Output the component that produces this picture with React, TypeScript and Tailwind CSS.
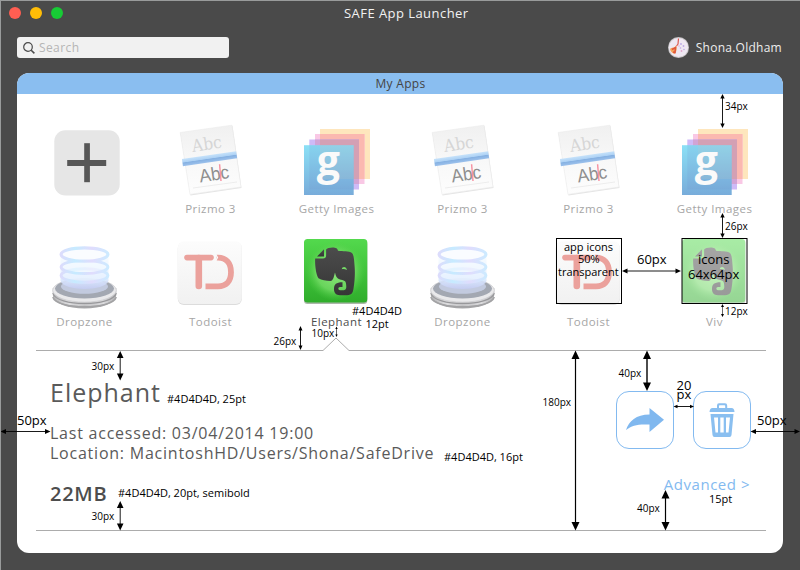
import React from "react";

function PlusIcon() {
  return (
    <svg className="h-[66px] w-[66px] overflow-visible" viewBox="0 0 66 66">
      <rect x="3.3" y="5.2" width="65.4" height="65.3" rx="11" fill="#e6e6e6" />
      <rect x="16.2" y="35" width="39" height="6" fill="#575757" />
      <rect x="33.2" y="18.2" width="5.7" height="39" fill="#575757" />
    </svg>
  );
}

function PrizmoIcon() {
  return (
    <svg className="h-[66px] w-[66px] overflow-visible" viewBox="0 0 66 66">
      <defs>
        <linearGradient id="pz" x1="0" y1="0" x2="0" y2="1">
          <stop offset="0" stopColor="#f0f0f0" />
          <stop offset="0.5" stopColor="#f8f8f8" />
          <stop offset="1" stopColor="#fdfdfd" />
        </linearGradient>
        <linearGradient id="pzb" x1="0" y1="0" x2="0" y2="1">
          <stop offset="0" stopColor="#c6e2fa" />
          <stop offset="0.45" stopColor="#aed2f5" />
          <stop offset="0.55" stopColor="#86b1e2" />
          <stop offset="1" stopColor="#9cc1ec" />
        </linearGradient>
      </defs>
      <path d="M3.5 8.5 55.5 1 64.5 63 13.500 70.600Z" fill="#e4e4e4" />
      <path d="M3.2 7.5 55 .2 64 62 13 69.400Z" fill="url(#pz)" stroke="#ebebeb" strokeWidth=".6" />
      <path d="M16 63 60 57" stroke="#e3e3e3" strokeWidth=".6" />
      <g transform="rotate(-8.3 33 34)">
        <text x="32" y="24.5" textAnchor="middle" textLength="30" lengthAdjust="spacingAndGlyphs" fontSize="17" fill="#d6d6d6" fontFamily="DejaVu Serif, serif">Abc</text>
        <rect x="5.2" y="30" width="54.8" height="7.2" fill="url(#pzb)" />
        <text x="35" y="55.8" textAnchor="middle" textLength="30" lengthAdjust="spacingAndGlyphs" fontSize="18.5" fill="#8e8e8e" fontFamily="Liberation Sans, sans-serif">Abc</text>
      </g>
      <path d="M42.600 39.300 44 56" stroke="#f78f9f" strokeWidth="1.400" />
    </svg>
  );
}

function GettyIcon() {
  return (
    <svg className="h-[66px] w-[66px] overflow-visible" viewBox="0 0 66 66">
      <defs>
        <linearGradient id="gt" x1="0" y1="0" x2="0" y2="1">
          <stop offset="0" stopColor="#8be0f6" />
          <stop offset="1" stopColor="#78acda" />
        </linearGradient>
      </defs>
      <rect x="17" y="4" width="50" height="50" fill="#fee6bd" />
      <rect x="12" y="9" width="49.500" height="50" fill="#f9c8e5" />
      <rect x="17" y="9" width="44.500" height="45" fill="#fbb8b0" />
      <rect x="6.300" y="14.500" width="49.700" height="50" fill="#cfbaf7" />
      <rect x="12" y="14.500" width="44" height="44.500" fill="#d1a4d5" />
      <rect x="17" y="14.500" width="39" height="39.500" fill="#d3a0b4" />
      <rect x="1" y="20.200" width="49.700" height="49.800" fill="url(#gt)" />
      <rect x="6.300" y="20.200" width="44.400" height="44.300" fill="#7088c8" opacity=".14" />
      <rect x="17" y="20.200" width="33.700" height="33.800" fill="#d8c8b8" opacity=".14" />
      <text x="13.800" y="50" fontSize="41" fontWeight="700" fill="#fafafa" fontFamily="Open Sans, sans-serif">g</text>
    </svg>
  );
}

function DropzoneIcon() {
  return (
    <svg className="h-[66px] w-[66px] overflow-visible" viewBox="0 0 66 66">
      <defs>
        <linearGradient id="dzm" x1="0" y1="0" x2="1" y2="0">
          <stop offset="0" stopColor="#b2b2b4" />
          <stop offset=".25" stopColor="#dedee0" />
          <stop offset=".5" stopColor="#c2c2c4" />
          <stop offset=".8" stopColor="#dcdcde" />
          <stop offset="1" stopColor="#b0b0b2" />
        </linearGradient>
        <linearGradient id="dzl" x1="0" y1="0" x2="0" y2="1">
          <stop offset="0" stopColor="#f1f9ff" stopOpacity=".6" />
          <stop offset=".7" stopColor="#dceafe" />
          <stop offset="1" stopColor="#c5cdf3" />
        </linearGradient>
        <linearGradient id="dzr" x1="0" y1="0" x2="1" y2="0">
          <stop offset="0" stopColor="#dcdcfc" />
          <stop offset=".3" stopColor="#c6ebff" />
          <stop offset=".65" stopColor="#e0dcfd" />
          <stop offset="1" stopColor="#cdeaff" />
        </linearGradient>
      </defs>
      <ellipse cx="33.500" cy="58.500" rx="31.300" ry="12" fill="#a6a6a8" />
      <path d="M1.800 50V57C3 72 64 72 65.300 57V50Z" fill="url(#dzm)" />
      <path d="M1.800 55C5 69 62 69 65.300 55" fill="none" stroke="#98989b" strokeWidth="1.100" />
      <path d="M1.800 59C5 72 62 72 65.300 59" fill="none" stroke="#a2a2a4" strokeWidth="1.400" />
      <ellipse cx="33.500" cy="52.300" rx="31.800" ry="11.800" fill="#e9e9eb" stroke="#cbcbce" strokeWidth=".7" />
      <ellipse cx="33.500" cy="50.500" rx="29.500" ry="10" fill="#a3a8b2" />
      <ellipse cx="33.500" cy="48.500" rx="23.500" ry="7.200" fill="#c2cadf" />
      <path d="M9.500 18V43C13 53.500 54 53.500 57.500 43V18Z" fill="url(#dzl)" opacity=".9" />
      <g fill="none" stroke="url(#dzr)">
        <ellipse cx="33.500" cy="37.500" rx="23.400" ry="6.800" strokeWidth="3" fill="#eef6ff" fillOpacity=".5" />
        <ellipse cx="33.500" cy="29" rx="23.400" ry="6.600" strokeWidth="3" fill="#f4faff" fillOpacity=".6" />
        <ellipse cx="33.500" cy="16.500" rx="23.400" ry="6.600" strokeWidth="3.200" fill="#fafcff" />
      </g>
    </svg>
  );
}

function TodoistIcon() {
  return (
    <svg className="h-[66px] w-[66px] overflow-visible" viewBox="0 0 66 66">
      <defs>
        <linearGradient id="td" x1="0" y1="0" x2="0" y2="1">
          <stop offset="0" stopColor="#fcfcfc" />
          <stop offset="1" stopColor="#f1f1f1" />
        </linearGradient>
      </defs>
      <rect x=".8" y="4" width="64" height="63" rx="6" fill="#dcdcdc" />
      <rect x=".8" y="3.200" width="64" height="62.800" rx="6" fill="url(#td)" />
      <g fill="none" stroke="#eba19c">
        <path d="M10 19.600H34" strokeWidth="5.600" strokeLinecap="round" />
        <path d="M21.800 20V48" strokeWidth="6.600" strokeLinecap="round" />
        <path d="M39.500 19.600H41C49 19.600 54 25 54 34.200C54 43.500 49 48.300 41 48.300H28.500" strokeWidth="5.800" />
      </g>
      <path d="M38.500 16 40.500 19.500 38.500 23.200" fill="none" stroke="#fafafa" strokeWidth="1.200" />
    </svg>
  );
}

function ElephantIcon() {
  return (
    <svg className="h-[66px] w-[66px] overflow-visible" viewBox="0 0 66 66">
      <defs>
        <linearGradient id="evs" x1="0" y1="0" x2="0" y2="1">
          <stop offset="0" stopColor="#53d94d" />
          <stop offset="1" stopColor="#2fad2b" />
        </linearGradient>
        <radialGradient id="evg">
          <stop offset="0" stopColor="#90e77e" />
          <stop offset=".65" stopColor="#7de06d" stopOpacity=".7" />
          <stop offset="1" stopColor="#4fcf45" stopOpacity="0" />
        </radialGradient>
        <linearGradient id="eve" x1="0" y1="0" x2="0" y2="1">
          <stop offset="0" stopColor="#4c4c4c" />
          <stop offset="1" stopColor="#363636" />
        </linearGradient>
      </defs>
      <rect x="1" y="2.500" width="63.300" height="63.500" rx="3.500" fill="#7f8f7d" opacity=".65" />
      <rect x="1" y="1" width="63.300" height="63.600" rx="3.500" fill="url(#evs)" />
      <circle cx="32.500" cy="33" r="30" fill="url(#evg)" />
      <path d="M14 18.500 21 11.300V18.500Z" fill="url(#eve)" />
      <path
        d="M12.200 20.600H20Q23.100 20.600 23.100 17.600V11.500C24 9.700 31 8.800 33.500 10.300C34.800 11.300 34.800 12.300 35 12.800C40 13.300 46 13 49 15C51 17 51.200 23 51.600 28C52.200 35 51.800 43 50.600 50C49.800 56 48 57.300 42 57.300H37C32.500 57.300 30.800 54.500 31 50.500C31.200 46.500 33 44.300 39.500 44.300V49H37Q35.300 49.200 35.300 50.500Q35.300 52.200 37 52.200H41C44 52.200 43.300 48 43 45.500C42.700 42.400 40 42.500 37 41.600C33.700 40.500 32.700 38 32 34.500C31 38 30.500 42.500 27.500 43C23 43 18.500 42 15.500 40.300C13 37 11.700 26 12.200 20.600Z"
        fill="url(#eve)"
      />
      <path d="M38.800 31.200C39 28.300 43.300 28 44 32C42 31 40.500 31 38.800 31.200Z" fill="#76da68" />
    </svg>
  );
}

function AppTile({ label, dim = true, children }: { label: string; dim?: boolean; children: React.ReactNode }) {
  return (
    <div className="flex flex-col items-center">
      {children}
      <span
        className={
          "mt-[10px] h-4 whitespace-nowrap pl-px text-[11.5px] leading-4 tracking-[0.04em] " +
          (dim ? "text-[#a6a6a6]" : "text-[#4d4d4d]")
        }
      >
        {label}
      </span>
    </div>
  );
}

type NoteProps = { at: string; size?: "s" | "m" | "l"; children: string };
const noteSize = { s: "text-[10px]", m: "text-[11px]", l: "text-[13px]" };
function Note({ at, size = "s", children }: NoteProps) {
  return <span className={`absolute whitespace-nowrap leading-none! ${noteSize[size]} ${at}`}>{children}</span>;
}

type ArrowProps = { x1: number; y1: number; x2: number; y2: number; w?: number; h?: number; sw?: number };
function Arrow({ x1, y1, x2, y2, w = 2, h = 4.5, sw = 0.9 }: ArrowProps) {
  const vertical = x1 === x2;
  const heads = vertical
    ? `M${x1} ${y1}l${w} ${h}h${-2 * w}ZM${x2} ${y2}l${w} ${-h}h${-2 * w}Z`
    : `M${x1} ${y1}l${h} ${w}v${-2 * w}ZM${x2} ${y2}l${-h} ${w}v${-2 * w}Z`;
  const line = vertical
    ? `M${x1} ${y1 + h - 1}V${y2 - h + 1}`
    : `M${x1 + h - 1} ${y1}H${x2 - h + 1}`;
  return (
    <>
      <path d={line} stroke="#000" strokeWidth={sw} />
      <path d={heads} fill="#000" />
    </>
  );
}

function Annotations() {
  return (
    <div className="pointer-events-none absolute inset-0 text-black">
      <svg className="absolute inset-0" width="800" height="570" viewBox="0 0 800 570">
        <Arrow x1={722.5} y1={94} x2={722.5} y2={128} w={2.2} />
        <Arrow x1={722.5} y1={213} x2={722.5} y2={238} w={2.2} />
        <Arrow x1={722.5} y1={304} x2={722.5} y2={317} w={1.5} h={3} sw={0.6} />
        <Arrow x1={622} y1={271} x2={681} y2={271} w={2.5} h={5.5} />
        <Arrow x1={300.5} y1={326} x2={300.5} y2={350} />
        <Arrow x1={336.5} y1={326.5} x2={336.5} y2={337} w={1.2} h={2.5} sw={0.6} />
        <Arrow x1={120.2} y1={351} x2={120.2} y2={380.5} w={3.3} h={7} />
        <Arrow x1={120.2} y1={501} x2={120.2} y2={530.5} w={3.3} h={7} />
        <Arrow x1={0.5} y1={431.5} x2={50.5} y2={431.5} w={2.6} h={5.5} />
        <Arrow x1={750.5} y1={431.5} x2={800} y2={431.5} w={2.6} h={5.5} />
        <Arrow x1={575.5} y1={350.5} x2={575.5} y2={530.5} w={4} h={8.5} sw={1.2} />
        <Arrow x1={647} y1={350.5} x2={647} y2={391} w={4} h={8.5} sw={1.4} />
        <Arrow x1={665.5} y1={490} x2={665.5} y2={530.5} w={4} h={8.5} sw={1.2} />
        <Arrow x1={673.5} y1={406.5} x2={694} y2={406.5} w={1.7} h={4} />
        <rect x="556.5" y="238.5" width="65" height="65" fill="none" stroke="#000" />
        <rect x="682" y="238.5" width="65" height="65" fill="none" stroke="#000" />
      </svg>
      <Note at="left-[725px] top-[101px]">34px</Note>
      <Note at="left-[725px] top-[221px]">26px</Note>
      <Note at="left-[725px] top-[306px]">12px</Note>
      <Note size="m" at="left-[564px] top-[241px]">app icons</Note>
      <Note size="m" at="left-[578px] top-[253px]">50%</Note>
      <Note size="m" at="left-[558px] top-[266px]">transparent</Note>
      <Note size="l" at="left-[637px] top-[253px]">60px</Note>
      <Note size="l" at="left-[698px] top-[253px]">icons</Note>
      <Note size="l" at="left-[688px] top-[268px]">64x64px</Note>
      <Note size="m" at="left-[352px] top-[305px]">#4D4D4D</Note>
      <Note size="m" at="left-[365.5px] top-[318px]">12pt</Note>
      <Note at="left-[311.5px] top-[328px]">10px</Note>
      <Note at="left-[273.5px] top-[336px]">26px</Note>
      <Note at="left-[91.5px] top-[361px]">30px</Note>
      <Note size="m" at="left-[167px] top-[393px]">#4D4D4D, 25pt</Note>
      <Note size="l" at="left-[17px] top-[414px]">50px</Note>
      <Note size="m" at="left-[118px] top-[487px]">#4D4D4D, 20pt, semibold</Note>
      <Note at="left-[91.5px] top-[511px]">30px</Note>
      <Note size="m" at="left-[444px] top-[451px]">#4D4D4D, 16pt</Note>
      <Note at="left-[618.5px] top-[368px]">40px</Note>
      <Note at="left-[542.5px] top-[397px]">180px</Note>
      <Note size="l" at="left-[676.5px] top-[379px]">20</Note>
      <Note size="l" at="left-[676.5px] top-[388px]">px</Note>
      <Note size="l" at="left-[757px] top-[414px]">50px</Note>
      <Note size="m" at="left-[709px] top-[493px]">15pt</Note>
      <Note at="left-[637px] top-[503px]">40px</Note>
    </div>
  );
}

function Avatar() {
  return (
    <svg className="size-[21px]" viewBox="0 0 21 21">
      <circle cx="10.5" cy="10.5" r="10.5" fill="#c9c6c8" />
      <circle cx="10.5" cy="10.5" r="9.6" fill="#efe8f2" />
      <path d="M10.500 1.500 10 7 8.500 9" fill="none" stroke="#dc5a50" strokeWidth="1.200" />
      <path d="M2 12C4 9.500 6 12 8 8.500C9.500 11 8.500 15.500 6.500 17C4.500 16 2.500 15 2 12Z" fill="#f4a65c" />
      <path d="M4 12.500 7.500 10.500 7 15.500 5 15" fill="none" stroke="#e0553c" strokeWidth="1.500" />
      <g fill="#bda9e4">
        <circle cx="13" cy="7" r=".9" />
        <circle cx="15.500" cy="9" r=".9" />
        <circle cx="12.500" cy="11" r=".8" />
        <circle cx="16" cy="12.500" r=".8" />
        <circle cx="13.500" cy="14" r=".9" fill="#e3a5cd" />
        <circle cx="11" cy="9" r=".7" fill="#e3a5cd" />
      </g>
    </svg>
  );
}

export default function App() {
  return (
    <main className="relative flex h-[570px] w-[800px] flex-col overflow-hidden border-l border-t border-[#999b9b] bg-[#4a4a4a] font-['Open_Sans',sans-serif]">
      <header className="flex h-6 items-center">
        <div className="flex w-[343px] gap-[9px] pl-2">
          <span className="size-3 rounded-full bg-[#ff5e52]" />
          <span className="size-3 rounded-full bg-[#ffbd07]" />
          <span className="size-3 rounded-full bg-[#17cb35]" />
        </div>
        <h1 className="text-[13px] leading-none tracking-[0.45px] text-[#f2f2f2]">SAFE App Launcher</h1>
      </header>

      <div className="mt-3 flex h-[21px] items-center justify-between pl-4 pr-[18px]">
        <div className="flex h-[21px] w-[211.5px] items-center gap-1 rounded-[3px] bg-[#f1f1f1] pl-[6px]">
          <svg className="size-3" viewBox="0 0 12 12" fill="none" stroke="#4a4a4a">
            <circle cx="5" cy="5" r="4.300" strokeWidth="1.200" />
            <path d="m8.200 8.200 3.200 3.200" strokeWidth="1.500" />
          </svg>
          <span className="text-[12px] leading-none tracking-[0.4px] text-[#b5b5b5]">Search</span>
        </div>
        <div className="flex items-center gap-[7px]">
          <Avatar />
          <span className="text-[12px] leading-none tracking-[0.26px] text-[#ededed]">Shona.Oldham</span>
        </div>
      </div>

      <section className="ml-4 mt-[15px] flex h-[480px] w-[766px] flex-col overflow-hidden rounded-xl bg-white">
        <h2 className="flex h-[21px] shrink-0 items-center justify-center bg-[#8abef0] pl-px pt-px text-[12px] leading-none tracking-[0.3px] text-[#444]">
          My Apps
        </h2>
        <div className="grid grid-cols-6 gap-y-[21px] pl-[4px] pr-[6px] pt-[31px]">
          <AppTile label=""><PlusIcon /></AppTile>
          <AppTile label="Prizmo 3"><PrizmoIcon /></AppTile>
          <AppTile label="Getty Images"><GettyIcon /></AppTile>
          <AppTile label="Prizmo 3"><PrizmoIcon /></AppTile>
          <AppTile label="Prizmo 3"><PrizmoIcon /></AppTile>
          <AppTile label="Getty Images"><GettyIcon /></AppTile>
          <AppTile label="Dropzone"><DropzoneIcon /></AppTile>
          <AppTile label="Todoist"><TodoistIcon /></AppTile>
          <AppTile label="Elephant" dim={false}><ElephantIcon /></AppTile>
          <AppTile label="Dropzone"><DropzoneIcon /></AppTile>
          <AppTile label="Todoist"><TodoistIcon /></AppTile>
          <AppTile label="Viv">
            <div className="opacity-50"><ElephantIcon /></div>
          </AppTile>
        </div>

        <svg className="ml-[19px] mt-[7px] h-[14px] w-[730px] shrink-0" viewBox="0 0 730 14">
          <path d="M0 13.500H287L300 1 313 13.500H730" fill="none" stroke="#acacac" />
        </svg>

        <div className="ml-[19px] mr-[17px] flex h-[180px] shrink-0 justify-between border-b border-[#acacac] pl-[14px] pr-[15px] text-[#5a5a5a]">
          <div className="flex flex-col pt-[29px]">
            <h3 className="text-[25px] leading-none tracking-[0.04em]">Elephant</h3>
            <p className="mt-[19px] text-[16px] leading-[19.5px] tracking-[0.048em]">
              Last accessed: 03/04/2014 19:00
              <br />
              Location: MacintoshHD/Users/Shona/SafeDrive
            </p>
            <strong className="mt-[21px] text-[20px] font-semibold leading-none tracking-[0.035em] text-[#4d4d4d]">22MB</strong>
          </div>
          <div className="flex flex-col items-end pt-[40px]">
            <div className="flex gap-[19px]">
              <button className="flex h-[58px] w-[58px] items-center justify-center rounded-[13px] border border-[#83baf0]">
                <svg className="h-6 w-[38px]" viewBox="0 0 38 24" fill="#80b8ef">
                  <path d="M0 22C3 13 10 6.500 23.500 6.500V0L38 11.800 23.500 24V16.500C12 16 6 17 0 22Z" />
                </svg>
              </button>
              <button className="flex h-[58px] w-[58px] items-center justify-center rounded-[13px] border border-[#83baf0]">
                <svg className="h-[34px] w-[26px]" viewBox="0 0 26 34" fill="#8abff0">
                  <path fillRule="evenodd" d="M8 5V2.500Q8 .3 10 .3H16Q18.200 .3 18.200 2.500V5H22.500Q25.300 5 25.500 9H.5Q.8 5 3.500 5ZM10 5H16.200V2.800Q16.200 2.200 15.500 2.200H10.700Q10 2.200 10 2.800Z" />
                  <path fillRule="evenodd" d="M1.500 11H24.500L22.500 32Q22.300 34 20.500 34H5.500Q3.700 34 3.500 32ZM5 14.500 6.500 29.500H9V14.500ZM11.300 14.500V29.500H14.700V14.500ZM17 14.500V29.500H19.500L21 14.500Z" />
                </svg>
              </button>
            </div>
            <a className="mr-px mt-7 text-[15px] leading-none tracking-[0.52px] text-[#83baf0]">Advanced &gt;</a>
          </div>
        </div>
      </section>
      <div className="pointer-events-none absolute -left-px -top-px h-[570px] w-[800px]">
        <Annotations />
      </div>
    </main>
  );
}
